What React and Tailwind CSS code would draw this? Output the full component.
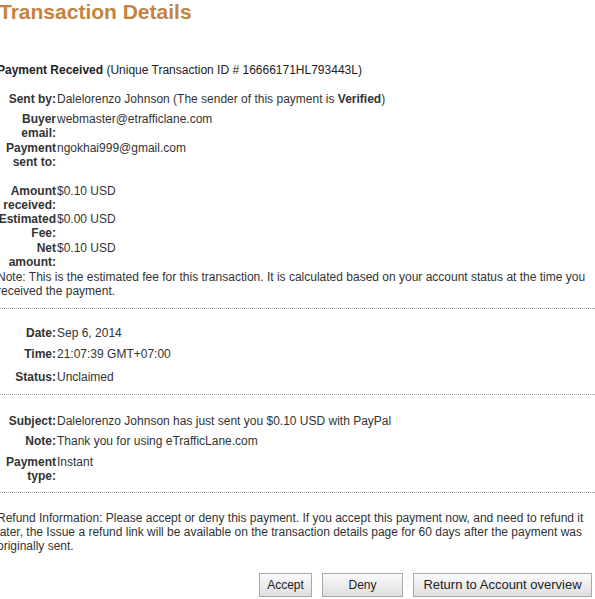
export default function App() {
    const Row = ({ label, children, className = "" }) => (
        <div className={`flex ${className}`}>
            <div className="w-[59px] shrink-0 text-right font-bold text-[#333]">
                {label}
            </div>
            <div className="pl-[1px]">{children}</div>
        </div>
    );

    return (
        <div
            className="w-[600px] ml-[-3px] bg-white text-[12px] leading-[14px] text-[#333]"
            style={{ fontFamily: '"Liberation Sans", Arial, sans-serif' }}
        >
            {/* Heading */}
            <h1 className="text-[21px] leading-[24px] font-bold text-[#c4833f] ml-[2px]">
                Transaction Details
            </h1>

            <p className="mt-[39px] text-[12px] text-[#222]">
                <b>Payment Received</b> (Unique Transaction ID # 16666171HL793443L)
            </p>

            {/* Sender / amounts */}
            <Row label="Sent by:" className="mt-[15px]">
                Dalelorenzo Johnson (The sender of this payment is <b>Verified</b>)
            </Row>
            <Row label="Buyer email:" className="mt-[6px]">
                webmaster@etrafficlane.com
            </Row>
            <Row label="Payment sent to:" className="mt-[1px]">
                ngokhai999@gmail.com
            </Row>
            <Row label="Amount received:" className="mt-[15px]">
                $0.10 USD
            </Row>
            <Row label="Estimated Fee:">$0.00 USD</Row>
            <Row label="Net amount:" className="mt-[1px]">
                $0.10 USD
            </Row>
            <p className="mt-[1px] pr-[8px]">
                Note: This is the estimated fee for this transaction. It is calculated based on
                your account status at the time you received the payment.
            </p>

            <div className="mt-[10px] border-t border-dotted border-[#999]" />

            {/* Date / status */}
            <Row label="Date:" className="mt-[17px]">
                Sep 6, 2014
            </Row>
            <Row label="Time:" className="mt-[7px]">
                21:07:39 GMT+07:00
            </Row>
            <Row label="Status:" className="mt-[9px]">
                Unclaimed
            </Row>

            <div className="mt-[10px] border-t border-dotted border-[#999]" />

            {/* Subject */}
            <Row label="Subject:" className="mt-[19px]">
                Dalelorenzo Johnson has just sent you $0.10 USD with PayPal
            </Row>
            <Row label="Note:" className="mt-[6px]">
                Thank you for using eTrafficLane.com
            </Row>
            <Row label="Payment type:" className="mt-[7px]">
                Instant
            </Row>

            <div className="mt-[9px] border-t border-dotted border-[#999]" />

            {/* Refund */}
            <p className="mt-[18px] pr-[8px]">
                Refund Information: Please accept or deny this payment. If you accept this payment
                now, and need to refund it later, the Issue a refund link will be available on the
                transaction details page for 60 days after the payment was originally sent.
            </p>

            <div className="mt-[20px] flex justify-end gap-[10px] pr-[5px] text-[12px]">
                <button className="h-[24px] w-[53px] border border-[#a8a8a8] bg-gradient-to-b from-[#fbfbfb] to-[#dedede] text-[#222]">
                    Accept
                </button>
                <button className="h-[24px] w-[81px] border border-[#a8a8a8] bg-gradient-to-b from-[#fbfbfb] to-[#dedede] text-[#222]">
                    Deny
                </button>
                <button className="h-[24px] w-[179px] border border-[#a8a8a8] bg-gradient-to-b from-[#fbfbfb] to-[#dedede] text-[13px] text-[#222]">
                    Return to Account overview
                </button>
            </div>
        </div>
    );
}
